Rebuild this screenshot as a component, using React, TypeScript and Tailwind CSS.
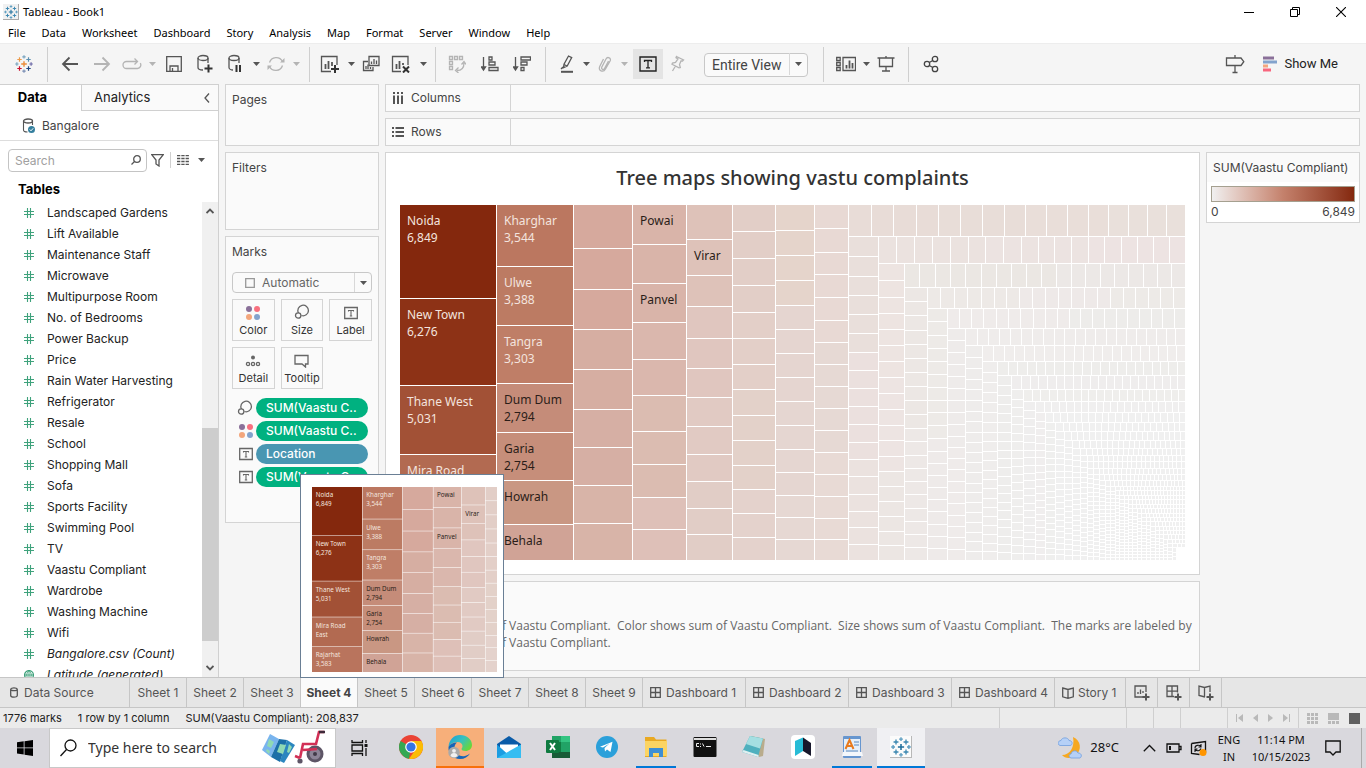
import React from "react";

/* ---------- shared helpers ---------- */

type IconProps = { w?: number; h?: number; color?: string; children: React.ReactNode; className?: string };

const Icon = ({ w = 20, h = 20, color = "#555", children, className }: IconProps) => (
  <svg
    width={w}
    height={h}
    viewBox={`0 0 ${w} ${h}`}
    fill="none"
    stroke={color}
    strokeWidth="1.3"
    aria-hidden="true"
    className={className ?? "shrink-0"}
  >
    {children}
  </svg>
);

const Caret = ({ color = "#555" }: { color?: string }) => (
  <Icon w={7} h={4} color={color}>
    <path d="M0 0h7L3.5 4z" fill={color} stroke="none" />
  </Icon>
);

const Plus = ({ x, y }: { x: number; y: number }) => (
  <path d={`M${x - 4} ${y}h8M${x} ${y - 4}v8`} stroke="#333" strokeWidth="2" />
);

const LogoCross = ({ x, y, r, c, w = 1.2 }: { x: number; y: number; r: number; c: string; w?: number }) => (
  <path d={`M${x - r} ${y}h${2 * r}M${x} ${y - r}v${2 * r}`} stroke={c} strokeWidth={w} />
);

const TableauLogo = ({ size = 18, colors }: { size?: number; colors: string[] }) => (
  <svg width={size} height={size} viewBox="0 0 18 18" fill="none" aria-hidden="true" className="shrink-0">
    <LogoCross x={9} y={9} r={2.8} c={colors[0]} w={1.4} />
    <LogoCross x={4.5} y={4.5} r={2.2} c={colors[1]} />
    <LogoCross x={13.5} y={4.5} r={2.2} c={colors[2]} />
    <LogoCross x={4.5} y={13.5} r={2.2} c={colors[3]} />
    <LogoCross x={13.5} y={13.5} r={2.2} c={colors[4]} />
    <LogoCross x={9} y={1.9} r={1.7} c={colors[5]} />
    <LogoCross x={9} y={16.1} r={1.7} c={colors[6]} />
    <LogoCross x={1.9} y={9} r={1.7} c={colors[7]} />
    <LogoCross x={16.1} y={9} r={1.7} c={colors[8]} />
  </svg>
);

const brandColors = ["#eb8c3a", "#eb9a4a", "#5b8fb0", "#c8102e", "#1f447e", "#7aa5c0", "#7b8fb5", "#7aa5c0", "#6d6aa8"];
const blueColors = ["#1f6f9c", "#3a86b0", "#3a86b0", "#3a86b0", "#3a86b0", "#5b9cc0", "#5b9cc0", "#5b9cc0", "#5b9cc0"];

/* ---------- treemap ---------- */

type Strip = { a: number; b: number; start: number; cuts?: number[]; fills: string[] };

const X_END = 1185;
const Y_END = 560;

const columns: Strip[] = [
  { a: 400, b: 496, start: 205, cuts: [298, 385, 454, 511], fills: ["#84280d", "#8d3216", "#a25136", "#b26a51", "#b9745d"] },
  { a: 497, b: 573, start: 205, cuts: [266, 325, 383, 432, 480, 524], fills: ["#bb7760", "#bc7b63", "#bf7e67", "#c58c79", "#c68e7a", "#c99783", "#d0a396"] },
  { a: 574, b: 632, start: 205, cuts: [248, 289, 329, 369, 409, 447, 485, 523], fills: ["#d6a99d", "#d6aea2", "#d6afa4", "#d8b4a8"] },
  { a: 633, b: 686, start: 205, cuts: [244, 283, 322, 359, 395, 431, 464, 497, 529], fills: ["#d9b4a9", "#dab7ad", "#dbbcb1", "#dec0b8"] },
  { a: 687, b: 732, start: 205, cuts: [239, 275, 306, 338, 368, 397, 426, 454, 481, 508, 534], fills: ["#dec2b9", "#e0c6bf", "#e1cac3", "#e1cdc6"] },
  { a: 733, b: 775, start: 205, cuts: [231, 258, 285, 312, 338, 364, 389, 415, 440, 465, 489, 513, 537], fills: ["#e2cec7", "#e3cfc8", "#e3d1c9", "#e4d2cc"] },
  { a: 776, b: 814, start: 205, cuts: [230, 255, 280, 305, 329, 353, 377, 401, 425, 449, 472, 495, 517, 539], fills: ["#e5d4cb", "#e5d5d0", "#e5d6d1", "#e6d8d3"] },
  { a: 815, b: 848, start: 205, cuts: [228, 252, 274, 297, 320, 342, 364, 386, 408, 430, 452, 474, 496, 518, 539], fills: ["#e8d9d4", "#e6d9d4", "#e8dad5"] },
  { a: 849, b: 878, start: 237, cuts: [256, 276, 295, 314, 333, 352, 370, 388, 406, 424, 442, 459, 476, 494, 511, 527, 544], fills: ["#e9dfdb", "#ebe0de", "#ebe2df"] },
  { a: 879, b: 904, start: 264, cuts: [280, 297, 313, 329, 345, 361, 377, 393, 409, 425, 440, 456, 471, 486, 501, 516, 531, 545], fills: ["#ede4e1", "#ede4e2", "#ece6e3"] },
  { a: 905, b: 927, start: 288, cuts: [301, 315, 330, 344, 358, 372, 386, 400, 414, 428, 441, 455, 468, 481, 494, 508, 521, 534, 547], fills: ["#ece7e4", "#ede8e6"] },
  { a: 928, b: 947, start: 309, cuts: [321, 335, 348, 361, 374, 387, 400, 412, 425, 438, 451, 463, 475, 487, 499, 511, 524, 536, 548], fills: ["#edeae7", "#eeeae9"] },
  { a: 948, b: 965, start: 329, cuts: [340, 352, 364, 376, 388, 400, 412, 424, 436, 447, 458, 469, 481, 492, 503, 515, 526, 537, 549], fills: ["#eeebea", "#efebea"] },
  { a: 966, b: 982, start: 346, fills: ["#eeeceb"] },
  { a: 983, b: 997, start: 362, fills: ["#efedec"] },
  { a: 998, b: 1011, start: 376, fills: ["#eeedec"] },
  { a: 1012, b: 1023, start: 390, fills: ["#efeeed"] },
  { a: 1024, b: 1035, start: 402, fills: ["#efeeee"] },
  { a: 1036, b: 1045, start: 413, fills: ["#f0eeee"] },
  { a: 1046, b: 1055, start: 423, fills: ["#efefee"] },
  ...(
    [
      [1056, 1064, 432], [1065, 1072, 441], [1073, 1080, 449], [1081, 1087, 456], [1088, 1093, 469],
      [1094, 1099, 475], [1100, 1105, 481], [1106, 1110, 487], [1111, 1115, 487], [1116, 1119, 491],
      [1120, 1124, 496], [1125, 1128, 500], [1129, 1132, 505], [1133, 1137, 509], [1138, 1141, 514],
      [1142, 1146, 518], [1147, 1150, 522], [1151, 1155, 527], [1156, 1159, 531], [1160, 1163, 535],
      [1164, 1167, 540], [1168, 1172, 544], [1173, 1176, 548],
    ] as const
  ).map(([a, b, start]) => ({ a, b, start, fills: ["#f0f0f0"] })),
];

const rows: Strip[] = [
  { a: 205, b: 236, start: 849, cuts: [871, 893, 916, 938, 960, 982, 1004, 1025, 1046, 1067, 1088, 1108, 1128, 1147, 1166], fills: ["#e8dcd7", "#e8ddd8", "#e9ded9", "#e9e0db"] },
  { a: 237, b: 263, start: 879, cuts: [896, 914, 932, 950, 968, 985, 1003, 1021, 1038, 1054, 1071, 1088, 1104, 1121, 1137, 1153, 1169], fills: ["#ebe2df", "#ece3e1", "#ede3e2"] },
  { a: 264, b: 287, start: 905, cuts: [919, 935, 950, 965, 981, 996, 1011, 1026, 1041, 1056, 1071, 1085, 1100, 1114, 1128, 1143, 1157, 1171], fills: ["#ebe7e3", "#ece8e6"] },
  { a: 288, b: 308, start: 928, cuts: [940, 954, 967, 981, 994, 1006, 1019, 1032, 1045, 1058, 1071, 1084, 1097, 1110, 1123, 1135, 1148, 1160, 1173], fills: ["#ede9e6", "#eee9e8", "#edeae7"] },
  { a: 309, b: 328, start: 948, cuts: [959, 971, 983, 996, 1008, 1020, 1033, 1045, 1057, 1069, 1080, 1092, 1104, 1116, 1127, 1139, 1151, 1162, 1174], fills: ["#efebea", "#edecea"] },
  { a: 329, b: 345, start: 966, fills: ["#efeceb"] },
  { a: 346, b: 361, start: 983, fills: ["#f0edec"] },
  { a: 362, b: 375, start: 998, fills: ["#eeedeb"] },
  { a: 376, b: 389, start: 1012, fills: ["#efeded"] },
  { a: 390, b: 401, start: 1024, fills: ["#efeeec"] },
  { a: 402, b: 412, start: 1036, fills: ["#f0efef"] },
  ...(
    [
      [413, 422, 1046], [423, 431, 1056], [432, 440, 1065], [441, 448, 1073], [449, 455, 1081],
      [456, 461, 1088], [462, 468, 1088], [469, 474, 1094], [475, 480, 1100], [481, 486, 1106],
      [487, 490, 1116], [491, 495, 1120], [496, 499, 1125], [500, 504, 1129], [505, 508, 1133],
      [509, 513, 1138], [514, 517, 1142], [518, 521, 1147], [522, 526, 1151], [527, 530, 1156],
      [531, 534, 1160], [535, 539, 1164], [540, 543, 1168], [544, 547, 1173],
    ] as const
  ).map(([a, b, start]) => ({ a, b, start, fills: ["#f0f0f0"] })),
];

const cutsOf = (s: Strip, end: number) => {
  if (s.cuts) return s.cuts;
  const length = end - s.start;
  const count = Math.min(21, Math.floor(length / 3.1));
  return Array.from({ length: count - 1 }, (_, i) => {
    const t = (i + 1) / count;
    return s.start + Math.round(length * t * (1.08 - 0.08 * t));
  });
};

const cellsOf = (s: Strip, end: number) => {
  const edges = [s.start - 1, ...cutsOf(s, end), end];
  const n = edges.length - 1;
  return edges.slice(0, n).map((e, i) => ({
    from: e + 1,
    size: edges[i + 1] - e - 1,
    fill: s.fills[Math.floor((i * s.fills.length) / n)],
  }));
};

const labels: { x: number; y: number; lines: string[]; dark?: boolean }[] = [
  { x: 407, y: 225, lines: ["Noida", "6,849"] },
  { x: 407, y: 319, lines: ["New Town", "6,276"] },
  { x: 407, y: 406, lines: ["Thane West", "5,031"] },
  { x: 407, y: 475, lines: ["Mira Road", "East"] },
  { x: 407, y: 532, lines: ["Rajarhat", "3,583"] },
  { x: 504, y: 225, lines: ["Kharghar", "3,544"] },
  { x: 504, y: 287, lines: ["Ulwe", "3,388"] },
  { x: 504, y: 346, lines: ["Tangra", "3,303"] },
  { x: 504, y: 404, lines: ["Dum Dum", "2,794"], dark: true },
  { x: 504, y: 453, lines: ["Garia", "2,754"], dark: true },
  { x: 504, y: 501, lines: ["Howrah"], dark: true },
  { x: 504, y: 545, lines: ["Behala"], dark: true },
  { x: 640, y: 225, lines: ["Powai"], dark: true },
  { x: 694, y: 260, lines: ["Virar"], dark: true },
  { x: 640, y: 304, lines: ["Panvel"], dark: true },
];

const Treemap = ({ box, className, crisp }: { box: string; className: string; crisp?: boolean }) => (
  <svg viewBox={box} className={className} role="img" aria-label="Tree map of Vaastu Compliant by location">
    <g shapeRendering={crisp ? "crispEdges" : "geometricPrecision"}>
      {columns.flatMap((s) =>
        cellsOf(s, Y_END).map((c) => (
          <rect key={`c${s.a}-${c.from}`} x={s.a} y={c.from} width={s.b - s.a} height={c.size} fill={c.fill} />
        ))
      )}
      {rows.flatMap((s) =>
        cellsOf(s, X_END).map((c) => (
          <rect key={`r${s.a}-${c.from}`} x={c.from} y={s.a} width={c.size} height={s.b - s.a} fill={c.fill} />
        ))
      )}
    </g>
    <g className="font-['Noto_Sans',sans-serif] text-[12px]">
      {labels.map((l) =>
        l.lines.map((t, i) => (
          <text key={l.x + t} x={l.x} y={l.y + i * 17} fill={l.dark ? "#2b1d18" : "#f3e4df"}>
            {t}
          </text>
        ))
      )}
    </g>
  </svg>
);

/* ---------- window header ---------- */

const TitleBar = () => (
  <header className="flex h-6 shrink-0 items-center bg-white pl-[3px]">
    <span className="flex h-4 w-4 items-center justify-center border-r border-b border-[#aaa] bg-[#f1f1f1]">
      <TableauLogo size={14} colors={blueColors} />
    </span>
    <span className="ml-1 text-[11px] text-black">Tableau - Book1</span>
    <div className="ml-auto flex h-5">
      <button aria-label="Minimize" className="flex w-[46px] items-center justify-center">
        <Icon w={10} h={10} color="#000"><path d="M0 5.5h10" strokeWidth="1" /></Icon>
      </button>
      <button aria-label="Restore" className="flex w-[46px] items-center justify-center">
        <Icon w={10} h={10} color="#000"><path d="M0.5 2.5h7v7h-7zM2.5 2.5v-2h7v7h-2" strokeWidth="1" /></Icon>
      </button>
      <button aria-label="Close" className="flex w-[46px] items-center justify-center">
        <Icon w={10} h={10} color="#000"><path d="M0 0l10 10M10 0L0 10" strokeWidth="1.1" /></Icon>
      </button>
      <span className="w-0.5" />
    </div>
  </header>
);

const MenuBar = () => (
  <nav className="flex h-[19px] shrink-0 items-center gap-4 bg-white pl-2 text-[11px] text-black">
    {["File", "Data", "Worksheet", "Dashboard", "Story", "Analysis", "Map", "Format", "Server", "Window", "Help"].map((m) => (
      <button key={m}>{m}</button>
    ))}
  </nav>
);

const Sep = () => <span className="h-[35px] w-px shrink-0 bg-[#cfcfcf]" />;

const Tool = ({ label, w, children }: { label: string; w: string; children: React.ReactNode }) => (
  <button aria-label={label} className={`${w} flex h-[30px] shrink-0 items-center justify-center`}>
    {children}
  </button>
);

const Drop = ({ label, color }: { label: string; color?: string }) => (
  <button aria-label={label} className="flex h-[30px] w-3 shrink-0 items-center justify-center">
    <Caret color={color} />
  </button>
);

const LIGHT = "#b4b4b4";

const Toolbar = () => (
  <div className="flex h-[41px] shrink-0 items-center border-t border-[#ededed] bg-[#f5f5f5]">
    <Tool label="Start page" w="w-[47px]"><TableauLogo size={18} colors={brandColors} /></Tool>
    <Sep />
    <div className="ml-1.5 flex items-center">
      <Tool label="Undo" w="w-8">
        <Icon w={18} h={16}><path d="M2 8h15M8.500 1.500L2 8l6.500 6.500" strokeWidth="1.800" /></Icon>
      </Tool>
      <Tool label="Redo" w="w-8">
        <Icon w={18} h={16} color={LIGHT}><path d="M1 8h15M9.500 1.500L16 8l-6.500 6.500" strokeWidth="1.800" /></Icon>
      </Tool>
      <Tool label="Replay" w="w-7">
        <Icon w={20} h={14} color={LIGHT}>
          <path d="M15 4.500H4.500a3.500 3.500 0 0 0 0 7h11a3.500 3.500 0 0 0 2.800-5.300M12.500 1.500l3 3-3 3" />
        </Icon>
      </Tool>
      <Drop label="Replay options" color={LIGHT} />
      <Tool label="Save" w="w-8">
        <Icon w={16} h={16}><path d="M0.700 0.700h14.600v14.600H0.700zM4 15V10h8v5M6.500 15v-3" /></Icon>
      </Tool>
      <Tool label="New data source" w="w-[30px]">
        <Icon w={18} h={20}>
          <ellipse cx="7" cy="4" rx="5" ry="2.500" />
          <path d="M2 4v9.500c0 1.300 2 2.500 5 2.500M12 4v5" />
          <Plus x={12.5} y={14.5} />
        </Icon>
      </Tool>
      <Tool label="Pause auto updates" w="w-[30px]">
        <Icon w={18} h={20}>
          <ellipse cx="8" cy="4" rx="5" ry="2.500" />
          <path d="M3 4v9.500c0 1.300 2 2.500 4 2.500M13 4v5" />
          <path d="M10.500 11v7M14 11v7" stroke="#333" strokeWidth="2" />
        </Icon>
      </Tool>
      <Drop label="Update options" />
      <Tool label="Run update" w="w-7">
        <Icon w={18} h={16} color={LIGHT}>
          <path d="M2.500 6.500A7 7 0 0 1 15.500 5.500M15.500 9.500A7 7 0 0 1 2.500 10.500" />
          <path d="M13 6.500h4.500V2zM5 9.500H0.500V14z" fill={LIGHT} stroke="none" />
        </Icon>
      </Tool>
      <Drop label="Run options" color={LIGHT} />
    </div>
    <span className="w-[7px]" />
    <Sep />
    <div className="ml-[5px] flex items-center">
      <Tool label="New worksheet" w="w-[30px]">
        <Icon w={20} h={18}>
          <path d="M11 16.500H1.500V1.500h15.500V10" />
          <path d="M5.500 14V9M8.500 14V6M12 11V7" strokeWidth="1.800" />
          <Plus x={15} y={14} />
        </Icon>
      </Tool>
      <Drop label="New sheet options" />
      <Tool label="Duplicate" w="w-7">
        <Icon w={18} h={18}>
          <path d="M7 1.500h10v9H7zM6 6.500H1.500v9h9.500V12" />
          <path d="M9.500 9V6.500M12 9V4M14.500 9V5.500M4 14v-3M6 14V9.500M8.500 14v-2" />
        </Icon>
      </Tool>
      <Tool label="Clear sheet" w="w-8">
        <Icon w={20} h={18}>
          <path d="M10 16.500H1.500V1.500h15.500V10" />
          <path d="M5.500 14V9M8.500 14V6M12 10V8" strokeWidth="1.800" />
          <path d="M12 11.500l6 6M18 11.500l-6 6" stroke="#333" strokeWidth="2" />
        </Icon>
      </Tool>
      <Drop label="Clear options" />
    </div>
    <span className="w-1.5" />
    <Sep />
    <div className="ml-[5px] flex items-center">
      <Tool label="Swap rows and columns" w="w-8">
        <Icon w={18} h={18} color={LIGHT}>
          <path d="M1.500 1.500h3v3h-3zM6.500 1.500h3v3h-3zM11.500 1.500h3v3h-3zM1.500 6.500h3v3h-3zM1.500 11.500h3v3h-3z" />
          <path d="M16 8c0 5-3 7.500-7 7.500M13.500 9.500L16 6.500l2 3M10.500 12.500L7.500 15.500l3 2.500" />
        </Icon>
      </Tool>
      <Tool label="Sort ascending" w="w-[34px]">
        <Icon w={18} h={16}>
          <path d="M2.500 1v12M0.500 11l2 3 2-3z" fill="#555" />
          <path d="M8 1h3v3H8zM8 6h6v3H8zM8 11.500h9v3H8z" />
        </Icon>
      </Tool>
      <Tool label="Sort descending" w="w-[30px]">
        <Icon w={18} h={16}>
          <path d="M2.500 1v12M0.500 11l2 3 2-3z" fill="#555" />
          <path d="M8 1h9.500v3H8zM8 6h6v3H8zM8 11.500h3v3H8z" />
        </Icon>
      </Tool>
    </div>
    <span className="w-2" />
    <Sep />
    <div className="ml-2 flex items-center">
      <Tool label="Highlight" w="w-[26px]">
        <Icon w={16} h={18}>
          <path d="M9.500 1l3.200 1.600-4.500 8.500-3.700 1.500.5-3.500zM5 9.500l3 1.500M4 12l-2 2" />
          <path d="M2 16.800h12" strokeWidth="2" />
        </Icon>
      </Tool>
      <Drop label="Highlight options" />
      <Tool label="Group" w="w-[26px]">
        <Icon w={16} h={18} color={LIGHT}>
          <path d="M11.500 6L7.500 13.500c-1 1.800-3.500 0.800-2.800-1.300L9 4c1.500-2.800 5.500-1 4.200 1.800L8.500 14c-2.200 4-7.700 1.800-5.800-2.500L6.500 4" />
        </Icon>
      </Tool>
      <Drop label="Group options" color={LIGHT} />
      <button aria-label="Show mark labels" aria-pressed="true" className="ml-[3px] flex h-[30px] w-[30px] items-center justify-center bg-[#e4e4e4]">
        <Icon w={18} h={16} color="#222">
          <path d="M1 1h16v14H1z" strokeWidth="1.400" />
          <path d="M5.500 6V4.500h7V6M9 4.500v7M7 11.800h4" />
        </Icon>
      </button>
      <Tool label="Fix axes" w="w-[30px]">
        <Icon w={16} h={18} color={LIGHT}>
          <path d="M6.500 1.500l7 3.500-1 1-1.500 0-1.500 3.500.8 3-1.300.3-7-3.500.5-1.300 3-.7L8 4 6 2.700zM5.500 11l-3 5" />
        </Icon>
      </Tool>
      <div className="relative ml-[11px] h-6 w-[104px]">
        <select aria-label="Fit" className="h-full w-full appearance-none rounded-sm border border-[#c8c8c8] bg-[#fafafa] pl-[7px] font-['Roboto',sans-serif] text-sm text-[#444]">
          <option>Entire View</option>
        </select>
        <span className="pointer-events-none absolute inset-y-px right-px flex w-[18px] items-center justify-center border-l border-[#d8d8d8]">
          <Caret />
        </span>
      </div>
    </div>
    <span className="w-[15px]" />
    <Sep />
    <div className="ml-2 flex items-center">
      <Tool label="Show or hide cards" w="w-7">
        <Icon w={20} h={16}>
          <path d="M0.700 1.500h3.500v3H0.700zM0.700 6.500h3.500v3H0.700zM0.700 11.500h3.500v3H0.700zM7 1.500h12.500v13H7z" />
          <path d="M10.500 12.500V9M13.500 12.500V4.500M16.500 12.500V7" strokeWidth="1.800" />
        </Icon>
      </Tool>
      <Drop label="Card options" />
      <Tool label="Presentation mode" w="w-7">
        <Icon w={18} h={18}><path d="M0.500 3h17M2.500 3v8.500h13V3M9 1v2M9 11.500v4.500M5 16h8" /></Icon>
      </Tool>
    </div>
    <span className="w-2" />
    <Sep />
    <div className="ml-2 flex items-center">
      <Tool label="Share" w="w-7">
        <Icon w={16} h={18} color="#444">
          <circle cx="4" cy="9" r="2.700" /><circle cx="12" cy="4" r="2.700" /><circle cx="12" cy="14" r="2.700" />
          <path d="M6.300 7.500l3.500-2M6.300 10.500l3.500 2" />
        </Icon>
      </Tool>
    </div>
    <div className="ml-auto flex items-center pr-7">
      <Tool label="Guide" w="w-9">
        <Icon w={20} h={20}><path d="M1.500 4h14.500l2.800 3.700-2.800 3.800H1.500zM10 1v3M10 11.500v7M7.500 18.500h5" /></Icon>
      </Tool>
      <button className="ml-2.5 flex items-center gap-1.5 font-['Roboto',sans-serif] text-[13px] text-[#222]">
        <Icon w={15} h={16}>
          <g stroke="none">
            <path d="M0 0.500h11v3H0z" fill="#8a7099" /><path d="M0 4.500h14v3H0z" fill="#83a3cd" />
            <path d="M0 8.500h5v3H0z" fill="#f3a680" /><path d="M0 12.500h8v3H0z" fill="#f8667e" />
          </g>
        </Icon>
        Show Me
      </button>
    </div>
  </div>
);

/* ---------- data pane ---------- */

const fields = [
  "Landscaped Gardens", "Lift Available", "Maintenance Staff", "Microwave", "Multipurpose Room", "No. of Bedrooms",
  "Power Backup", "Price", "Rain Water Harvesting", "Refrigerator", "Resale", "School", "Shopping Mall", "Sofa",
  "Sports Facility", "Swimming Pool", "TV", "Vaastu Compliant", "Wardrobe", "Washing Machine", "Wifi",
];

const Hash = () => (
  <Icon w={10} h={10} color="#3fa27c"><path d="M3.500 0v10M6.500 0v10M0 3.500h10M0 6.500h10" strokeWidth="1.100" /></Icon>
);

const DataPane = () => (
  <aside className="flex w-[219px] shrink-0 flex-col border-t border-r border-[#d0d0d0] bg-white">
    <div className="flex h-[26px] shrink-0 text-[13px]">
      <button className="w-[81px] pr-4 font-bold text-black">Data</button>
      <button className="flex flex-1 items-center border-b border-l border-[#d0d0d0] bg-[#fafafa] pl-3 text-[#222]">
        Analytics
        <Icon w={6} h={10} className="ml-auto mr-2"><path d="M5 0.500L1 5l4 4.500" /></Icon>
      </button>
    </div>
    <div className="flex h-[30px] shrink-0 items-center gap-[7px] border-b border-[#ddd] pl-[22px] text-xs text-[#444]">
      <Icon w={13} h={16}>
        <ellipse cx="6" cy="3" rx="4.500" ry="2" />
        <path d="M1.500 3v9c0 1 1.500 2 4 2M10.500 3v4" strokeWidth="1.100" />
        <circle cx="9.500" cy="11.500" r="3.500" fill="#347f9e" stroke="none" />
        <path d="M7.800 11.500l1.200 1.300 2.200-2.500" stroke="#fff" strokeWidth="1" />
      </Icon>
      Bangalore
    </div>
    <div className="mt-[7px] flex h-6 shrink-0 items-center pl-2">
      <div className="relative h-[23px] w-[139px]">
        <input aria-label="Search fields" placeholder="Search" className="block h-full w-full rounded-sm border border-[#c4c4c4] pl-1.5 text-xs placeholder:text-[#a0a0a0]" />
        <Icon w={10} h={10} className="pointer-events-none absolute top-1.5 right-1.5">
          <circle cx="6" cy="4" r="3.300" /><path d="M3.500 6.500L0.500 9.500" />
        </Icon>
      </div>
      <button aria-label="Filter fields" className="ml-1"><Icon w={13} h={13}><path d="M0.700 0.700h11.600L8 6v6L5 10V6z" /></Icon></button>
      <span className="ml-1.5 h-4 w-px bg-[#d0d0d0]" />
      <button aria-label="Display options" className="ml-1.5 flex items-center gap-[9px]">
        <Icon w={12} h={10}><path d="M0 0.500h12M0 3.500h12M0 6.500h12M0 9.500h12" strokeDasharray="3.300 1" /></Icon>
        <Caret />
      </button>
    </div>
    <h2 className="mt-1.5 h-6 shrink-0 pl-[18px] text-[13px] leading-[22px] font-bold text-black">Tables</h2>
    <div className="flex min-h-0 flex-1">
      <ul className="min-w-0 flex-1 overflow-hidden text-xs whitespace-nowrap text-[#222]">
        {fields.map((f) => (
          <li key={f} className="flex h-[21px] items-center gap-[13px] pl-6"><Hash />{f}</li>
        ))}
        <li className="flex h-[21px] items-center gap-[13px] pl-6 italic"><Hash />Bangalore.csv (Count)</li>
        <li className="flex h-[21px] items-center gap-[13px] pl-6 italic">
          <Icon w={10} h={10} color="#3fa27c"><circle cx="5" cy="5" r="4.400" /><path d="M5 0.500v9M0.500 5h9M5 0.500c-3 3-3 6 0 9M5 0.500c3 3 3 6 0 9" strokeWidth="0.900" /></Icon>
          Latitude (generated)
        </li>
      </ul>
      <div className="flex w-4 flex-col items-center bg-[#f0f0f0]">
        <Icon w={8} h={6} className="mt-1.5 shrink-0"><path d="M0.500 5L4 1.500 7.500 5" strokeWidth="1.800" /></Icon>
        <span className="grow-[9]" />
        <span className="w-full grow-[9] bg-[#cdcdcd]" />
        <span className="grow-1" />
        <Icon w={8} h={6} className="mb-1.5 shrink-0"><path d="M0.500 1L4 4.500 7.500 1" strokeWidth="1.800" /></Icon>
      </div>
    </div>
  </aside>
);

/* ---------- marks card ---------- */

const ColorDots = () => (
  <Icon w={14} h={14}>
    <g stroke="none">
      <circle cx="3" cy="3" r="3" fill="#8a7099" /><circle cx="11" cy="3" r="3" fill="#f8707f" />
      <circle cx="3" cy="11" r="3" fill="#f3a67c" /><circle cx="11" cy="11" r="3" fill="#83a3cd" />
    </g>
  </Icon>
);
const SizeIcon = () => (
  <Icon w={16} h={16} color="#666"><path d="M4.500 9A5.300 5.300 0 1 1 7.500 11.500" /><circle cx="4.200" cy="11.500" r="2.700" /></Icon>
);
const LabelIcon = () => (
  <Icon w={14} h={14} color="#666">
    <path d="M0.700 1.500h12.600v11H0.700z" /><path d="M4.500 5.500v-1h5v1M7 4.500v5.500M5.800 10h2.400" strokeWidth="1.100" />
  </Icon>
);
const DetailIcon = () => (
  <Icon w={16} h={14} color="#666">
    <circle cx="8" cy="3.500" r="2" fill="#666" stroke="none" />
    <circle cx="3" cy="10" r="1.600" /><circle cx="8" cy="10" r="1.600" /><circle cx="13" cy="10" r="1.600" />
  </Icon>
);
const TooltipIcon = () => (
  <Icon w={15} h={14} color="#666"><path d="M1 1.500h13v8.500h-2.500v3L8 10H1z" /></Icon>
);

const markButtons: [string, React.ReactNode][] = [
  ["Color", <ColorDots />], ["Size", <SizeIcon />], ["Label", <LabelIcon />], ["Detail", <DetailIcon />], ["Tooltip", <TooltipIcon />],
];
const pills: [string, React.ReactNode, string][] = [
  ["SUM(Vaastu C..", <SizeIcon />, "bg-[#00b180]"],
  ["SUM(Vaastu C..", <ColorDots />, "bg-[#00b180]"],
  ["Location", <LabelIcon />, "bg-[#4996b2]"],
  ["SUM(Vaastu C..", <LabelIcon />, "bg-[#00b180]"],
];

const Cards = () => (
  <div className="flex w-[154px] shrink-0 flex-col gap-1.5 text-xs leading-5 text-[#444]">
    <section className="h-[62px] border border-[#d4d4d4] bg-[#fafafa] px-1.5 pt-[5px]">Pages</section>
    <section className="h-[78px] border border-[#d4d4d4] bg-[#fafafa] px-1.5 pt-[5px]">Filters</section>
    <section className="border border-[#d4d4d4] bg-[#fafafa] px-1.5 pt-[5px] pb-[35px]">
      <h2>Marks</h2>
      <div className="relative mt-2.5 h-[21px]">
        <select aria-label="Mark type" className="block h-full w-full appearance-none rounded-sm border border-[#c8c8c8] bg-[#fafafa] pl-[29px] text-xs text-[#666]">
          <option>Automatic</option>
        </select>
        <span className="pointer-events-none absolute inset-y-0 left-[13px] flex items-center">
          <Icon w={10} h={10} color="#999"><path d="M0.700 0.700h8.600v8.600H0.700z" /></Icon>
        </span>
        <span className="pointer-events-none absolute inset-y-px right-px flex w-[17px] items-center justify-center border-l border-[#d8d8d8]">
          <Caret />
        </span>
      </div>
      <div className="mt-1.5 grid grid-cols-3 gap-1.5">
        {markButtons.map(([name, icon]) => (
          <button key={name} className="flex h-[42px] flex-col items-center justify-end gap-px border border-[#d4d4d4] pb-px text-[11px] text-[#333]">
            {icon}
            <span className="leading-[18px]">{name}</span>
          </button>
        ))}
      </div>
      <ul className="mt-[9px] flex flex-col gap-[3px]">
        {pills.map(([name, icon, tone], i) => (
          <li key={i} className="flex h-5 items-center gap-[3px] pr-1">
            <span className="flex w-[21px] shrink-0 justify-end">{icon}</span>
            <button className={`${tone} h-5 flex-1 rounded-full pl-2.5 text-left text-xs font-medium whitespace-nowrap text-white`}>{name}</button>
          </li>
        ))}
      </ul>
    </section>
  </div>
);

/* ---------- worksheet ---------- */

const Shelf = ({ name, icon }: { name: string; icon: React.ReactNode }) => (
  <div className="flex h-7 shrink-0 border border-[#d4d4d4] bg-[#fafafa] text-xs text-[#444]">
    <div className="flex w-[125px] items-center gap-[7px] border-r border-[#d4d4d4] pl-1.5">{icon}{name}</div>
  </div>
);

const Worksheet = () => (
  <main className="flex min-w-0 flex-1 flex-col gap-1.5">
    <Shelf name="Columns" icon={<Icon w={12} h={12}><path d="M2 0v2M2 3.500V12M6 0v2M6 3.500V12M10 0v2M10 3.500V12" strokeWidth="2" /></Icon>} />
    <Shelf name="Rows" icon={<Icon w={12} h={10}><path d="M0 1h2M3.500 1H12M0 5h2M3.500 5H12M0 9h2M3.500 9H12" strokeWidth="2" /></Icon>} />
    <div className="flex min-h-0 flex-1 gap-1.5">
      <div className="flex min-w-0 flex-1 flex-col gap-1.5">
        <section className="flex min-h-0 flex-1 flex-col border border-[#d4d4d4] bg-white px-3.5 pb-3.5">
          <h1 className="h-[52px] shrink-0 pt-3 text-center font-['Noto_Sans',sans-serif] text-xl leading-[26px] font-medium text-[#333]">
            Tree maps showing vastu complaints
          </h1>
          <Treemap crisp box="400 205 785 355" className="min-h-0 w-full flex-1" />
        </section>
        <section className="h-[90px] shrink-0 border border-[#d4d4d4] bg-[#fafafa] pt-[35px] pl-1.5 font-['Open_Sans',sans-serif] text-xs leading-[17px] whitespace-pre-wrap text-[#666]">
          {"Location and sum of Vaastu Compliant.  Color shows sum of Vaastu Compliant.  Size shows sum of Vaastu Compliant.  The marks are labeled by Location and sum of Vaastu Compliant."}
        </section>
      </div>
      <section className="h-[71px] w-[154px] shrink-0 border border-[#d4d4d4] bg-white text-xs text-[#444]">
        <h2 className="h-[29px] bg-[#fafafa] pl-1.5 leading-[30px]">SUM(Vaastu Compliant)</h2>
        <div className="mx-1 mt-1 h-4 border border-[#a5a090] bg-linear-to-r from-[#f0f0f0] via-[#c4816c] to-[#84280d]" />
        <div className="flex justify-between px-1 leading-[19px]"><span>0</span><span>6,849</span></div>
      </section>
    </div>
  </main>
);

/* ---------- sheet tabs and status ---------- */

const GridIcon = () => <Icon w={11} h={11}><path d="M0.700 0.700h9.600v9.600H0.700zM5.500 0.700v9.600M0.700 5.500h9.600" /></Icon>;
const BookIcon = () => <Icon w={12} h={12}><path d="M0.700 1l5.300 1.500L11.300 1v8.800L6 11.300 0.700 9.800zM6 2.500v8.800" /></Icon>;

const sheets = ["Sheet 1", "Sheet 2", "Sheet 3", "Sheet 4", "Sheet 5", "Sheet 6", "Sheet 7", "Sheet 8", "Sheet 9"];

const SheetTabs = () => (
  <div className="flex h-[31px] shrink-0 border-y border-[#c6c6c6] bg-[#e6e6e6] text-xs text-[#555]">
    <button className="flex w-[130px] shrink-0 items-center gap-1.5 border-r border-[#c6c6c6] pl-2.5">
      <Icon w={8} h={11}><path d="M0.700 2.500v6c0 2.200 6.600 2.200 6.600 0v-6c0-2.200-6.600-2.200-6.600 0c0 1.500 6.600 1.500 6.600 0" /></Icon>
      Data Source
    </button>
    {sheets.map((s) =>
      s === "Sheet 4" ? (
        <div key={s} className="relative shrink-0">
          <button aria-current="page" className="h-full w-[57px] border-r border-[#c6c6c6] bg-[#fafafa] font-bold text-[#444]">{s}</button>
          <div className="absolute bottom-full left-0 z-10 -ml-px h-[204px] w-[204px] border border-[#6a7f95] bg-white pt-3 pl-[11px]">
            <Treemap box="400 205 355 355" className="h-[185px] w-[185px]" />
          </div>
        </div>
      ) : (
        <button key={s} className="w-[57px] shrink-0 border-r border-[#c6c6c6]">{s}</button>
      )
    )}
    {["Dashboard 1", "Dashboard 2", "Dashboard 3", "Dashboard 4"].map((d) => (
      <button key={d} className="flex w-[103px] shrink-0 items-center gap-[5px] border-r border-[#c6c6c6] pl-[7px] whitespace-nowrap"><GridIcon />{d}</button>
    ))}
    <button className="flex w-[71px] shrink-0 items-center gap-1 border-r border-[#c6c6c6] pl-[7px]"><BookIcon />Story 1</button>
    <button aria-label="New worksheet" className="flex w-8 shrink-0 items-center justify-center border-r border-[#c6c6c6]">
      <Icon w={16} h={16}><path d="M9 12H1V1h11v6M4 9V7M6.500 9V4.500M9 8V6" /><path d="M8.500 12h7M12 8.500v7" strokeWidth="2" /></Icon>
    </button>
    <button aria-label="New dashboard" className="flex w-8 shrink-0 items-center justify-center border-r border-[#c6c6c6]">
      <Icon w={16} h={16}><path d="M8 11.500H1V1h10.500v6.500M6 1v10.500M1 6.200h10.500" /><path d="M8.500 12h7M12 8.500v7" strokeWidth="2" /></Icon>
    </button>
    <button aria-label="New story" className="flex w-8 shrink-0 items-center justify-center border-r border-[#c6c6c6]">
      <Icon w={16} h={16}><path d="M7 12L1 10.500V1l5.500 1.500L12 1v6M6.500 2.500V12" /><path d="M8.500 12h7M12 8.500v7" strokeWidth="2" /></Icon>
    </button>
  </div>
);

const G = "#b9b9b9";

const StatusBar = () => (
  <footer className="flex h-5 shrink-0 items-stretch bg-[#ebebeb] text-[11px] text-[#222]">
    <div className="flex items-center gap-4 pl-[3px]">
      <span>1776 marks</span><span>1 row by 1 column</span><span>SUM(Vaastu Compliant): 208,837</span>
    </div>
    <div className="ml-auto flex">
      <span className="w-[127px] border-l border-[#cfcfcf]" />
      <span className="w-[27px] border-l border-[#cfcfcf]" />
      <span className="w-[27px] border-l border-[#cfcfcf]" />
      <span className="w-[47px] border-l border-[#cfcfcf]" />
      <div className="flex w-[71px] items-center justify-between border-l border-[#cfcfcf] px-2">
        <button aria-label="First sheet"><Icon w={7} h={8}><path d="M0 0h1v8H0zM7 0v8L2 4z" fill={G} stroke="none" /></Icon></button>
        <button aria-label="Previous sheet"><Icon w={5} h={8}><path d="M5 0v8L0 4z" fill={G} stroke="none" /></Icon></button>
        <button aria-label="Next sheet"><Icon w={5} h={8}><path d="M0 0v8l5-4z" fill={G} stroke="none" /></Icon></button>
        <button aria-label="Last sheet"><Icon w={7} h={8}><path d="M6 0h1v8H6zM0 0v8l5-4z" fill={G} stroke="none" /></Icon></button>
      </div>
      <div className="flex w-[68px] items-center gap-[10px] border-l border-[#cfcfcf] pl-2">
        <button aria-label="Sheet sorter"><Icon w={11} h={11}><path d="M0 1.500h11M0 5.500h11M0 9.500h11" stroke={G} strokeWidth="3" strokeDasharray="3 1" /></Icon></button>
        <button aria-label="Filmstrip"><Icon w={11} h={11}><path d="M0 0h11v7H0z" fill={G} stroke="none" /><path d="M0 9.500h11" stroke={G} strokeWidth="3" strokeDasharray="3 1" /></Icon></button>
        <button aria-label="Tabs"><Icon w={11} h={11}><path d="M0 0h11v11H0z" fill="#606060" stroke="none" /></Icon></button>
      </div>
    </div>
  </footer>
);

/* ---------- desktop taskbar ---------- */

const App24 = ({ children }: { children: React.ReactNode }) => (
  <svg width="24" height="24" viewBox="0 0 24 24" aria-hidden="true">{children}</svg>
);

const Chrome = () => (
  <App24>
    <circle cx="12" cy="12" r="12" fill="#ea4335" />
    <path d="M1.600 6L12 12l-2 11.800A12 12 0 0 1 1.600 6z" fill="#34a853" />
    <path d="M12 6h10.400A12 12 0 0 1 10 23.800L17 14z" fill="#fbbc05" />
    <circle cx="12" cy="12" r="5.800" fill="#fff" /><circle cx="12" cy="12" r="4.600" fill="#3574e2" />
  </App24>
);
const Edge = () => (
  <App24>
    <defs>
      <linearGradient id="edgeTop" x1="0" y1="0" x2="1" y2="0.600"><stop offset="0" stopColor="#1b9bd8" /><stop offset="0.550" stopColor="#35c1c0" /><stop offset="1" stopColor="#68d63c" /></linearGradient>
    </defs>
    <path d="M0.500 12C1 4.500 6 0 12 0c7 0 12 4.500 12 10 0 3.800-3 6-6.500 6-2.500 0-4-1-4-2 0-.8 1-1 1-3 0-2-2-4-5-4-5 0-8 3-9 5z" fill="url(#edgeTop)" />
    <path d="M0.500 12C2 9 5 7.500 9 7.500c-2 1.500-3 4-2.500 7C7.500 19 12 22 17 21c2-.4 3.500-1.300 5-2.500-2 3.500-5.500 5.500-10 5.500C5 24 0 18.500 0.500 12z" fill="#1565b8" />
    <circle cx="6" cy="17.500" r="5.700" fill="#a9a9a9" /><circle cx="6" cy="15.800" r="1.900" fill="#f0f0f0" /><path d="M2.500 21c0-4 7-4 7 0-2 1.800-5 1.800-7 0z" fill="#f0f0f0" />
  </App24>
);
const Mail = () => (
  <App24>
    <path d="M0 9L12 1l12 8v14H0z" fill="#0a5ba8" /><path d="M3 9.500h18V18H3z" fill="#fff" />
    <path d="M0 9.500L15 23H0z" fill="#1b9de2" /><path d="M24 9.500V23H0z" fill="#35bdf2" />
  </App24>
);
const Excel = () => (
  <App24>
    <path d="M6 1h18v22H6z" fill="#21a366" /><path d="M15 1h9v6h-9z" fill="#33c481" /><path d="M6 7h9v11H6z" fill="#107c41" /><path d="M6 17h18v6H6z" fill="#185c37" />
    <rect x="0" y="5" width="13" height="13" rx="1" fill="#0f7a40" /><path d="M4 8l5 7M9 8l-5 7" stroke="#fff" strokeWidth="2" />
  </App24>
);
const Telegram = () => (
  <App24><circle cx="12" cy="12" r="11" fill="#2ba0da" /><path d="M5 11.800l12.500-5L15.500 17l-3.500-2.400-2 2-.5-3.500 5-4.500-6.500 4z" fill="#fff" /></App24>
);
const Folder = () => (
  <App24>
    <path d="M1 2h9l2 2.500h10.500V22H1z" fill="#e9a922" /><path d="M1 6h22v15H1z" fill="#fcd462" />
    <path d="M5 13h14v9h-4v-4H9v4H5z" fill="#3e8fd4" />
  </App24>
);
const Terminal = () => (
  <App24>
    <rect x="0.500" y="2" width="23" height="20" rx="1" fill="#111" /><path d="M1 3h22v2H1z" fill="#ddd" />
    <path d="M6 8.500H3.500v3H6M7.500 8.500v1M7.500 11v1M9.500 8.500l1.500 3M13 11.500h5" stroke="#eee" fill="none" />
  </App24>
);
const Notepad = () => (
  <App24><path d="M9 1l14 3-2 17-4 1z" fill="#b9ac8c" /><path d="M8 1l13 2.500L16 22 0 17z" fill="#4fb0be" /><path d="M8 1l13 2.500-3 10L4 9z" fill="#a5dfe2" /><path d="M0 17l16 5 .5-2L1.500 15z" fill="#dfeff0" /></App24>
);
const MapApp = () => (
  <App24><rect width="24" height="24" rx="4" fill="#fff" /><path d="M4 6l8-3.500V16l-8 5z" fill="#27bcd6" /><path d="M12 2.500L20 8v13l-8-5z" fill="#17172b" /></App24>
);
const WordPad = () => (
  <App24>
    <rect x="3" y="1" width="18" height="22" rx="1" fill="#6796cf" /><path d="M4 4h16v14H4z" fill="#e5effa" /><path d="M3 17h19l1 4H2z" fill="#f4f7fb" />
    <path d="M5.500 14l4-9 4 9M7 11h5" stroke="#e87a1d" strokeWidth="2" fill="none" /><path d="M14 7h5M14 10h5M6 16h12" stroke="#5b88bb" />
  </App24>
);
const TableauApp = () => (
  <span className="flex h-[22px] w-[22px] items-center justify-center border-r border-b border-[#b8b8b8] bg-[#fbfbfb]"><TableauLogo size={20} colors={blueColors} /></span>
);

const apps: [string, React.ReactNode, "" | "attention" | "open" | "active"][] = [
  ["Google Chrome", <Chrome />, ""], ["Microsoft Edge", <Edge />, "attention"], ["Mail", <Mail />, ""], ["Excel", <Excel />, ""],
  ["Telegram", <Telegram />, ""], ["File Explorer", <Folder />, "open"], ["Command Prompt", <Terminal />, ""], ["Notepad", <Notepad />, ""],
  ["Maps", <MapApp />, ""], ["WordPad", <WordPad />, "open"], ["Tableau", <TableauApp />, "active"],
];
const appTone = {
  "": "border-transparent",
  attention: "border-[#f7700c] bg-[#f7af7a]",
  open: "border-transparent",
  active: "border-[#0078d7] bg-[#f0f0f3]",
};

const Taskbar = () => (
  <div className="flex h-10 shrink-0 items-stretch bg-[#d9d8dd] text-[11px] text-[#111]">
    <button aria-label="Start" className="flex w-[49px] items-center justify-center">
      <Icon w={16} h={16}><path d="M0 2.300L6.700 1.300v6.200H0zM7.500 1.200L16 0v7.500H7.500zM0 8.300h6.700v6.300L0 13.600zM7.500 8.300H16V16l-8.500-1.200z" fill="#000" stroke="none" /></Icon>
    </button>
    <label className="flex w-[287px] items-center border border-[#c8c8c8] bg-white pl-2.5">
      <Icon w={17} h={18} color="#111"><circle cx="10.500" cy="6.500" r="5.500" /><path d="M6.500 10.500L0.500 17" /></Icon>
      <input aria-label="Search the computer" placeholder="Type here to search" className="ml-[11px] w-[160px] text-sm placeholder:text-[#333]" />
      <svg width="66" height="36" viewBox="0 0 66 36" aria-hidden="true" className="ml-auto mr-2">
        <path d="M9 4l9 5-8 18-9-7z" fill="#79b4ee" /><path d="M18 9l8 1-7 22-9-5z" fill="#1c6fa8" /><path d="M26 10l8 5-11 18-4-2z" fill="#2b86bf" />
        <path d="M8 9l5 3-3 6-4-2zM19 14l6 1-3 9-6-2zM28 14l3 3-3 6-2-1zM6 19l3 2-1 3-3-3z" fill="#8fd9b4" />
        <circle cx="54" cy="24" r="8.500" fill="#5d5566" /><circle cx="54" cy="24" r="5.500" fill="#8d8598" /><circle cx="54" cy="24" r="2" fill="#413a49" />
        <circle cx="39" cy="31" r="2.600" fill="#5d5566" />
        <path d="M63 2h-5l-3 12H42l-3 14M42 20l14-1M34 26l5 2" stroke="#d23056" strokeWidth="2.600" fill="none" /><path d="M58 2h6" stroke="#3f2a3a" strokeWidth="2.500" />
      </svg>
    </label>
    <button aria-label="Task view" className="flex w-[47px] items-center justify-center">
      <Icon w={17} h={16} color="#111"><path d="M1 0v2.500h10.500V0M1 16v-2.500h10.500V16M1 5h10.500v6H1zM15 0v3M15 8v8" /><path d="M13.500 4h3v3h-3z" fill="#111" stroke="none" /></Icon>
    </button>
    <div className="ml-1 flex gap-px">
      {apps.map(([name, icon, state]) => (
        <button key={name} aria-label={name} className={`${appTone[state]} relative flex w-12 items-center justify-center border-b-2`}>
          {icon}
          {state === "open" && <span className="absolute inset-x-1 -bottom-0.5 h-0.5 bg-[#0078d7]" />}
        </button>
      ))}
    </div>
    <div className="ml-auto flex items-center">
      <button className="flex items-center gap-2 text-[13px]">
        <svg width="24" height="24" viewBox="0 0 24 24" aria-hidden="true">
          <path d="M15 1c8 3 9 13 3 18-4 4-11 4-14 0 8 0 13-8 11-18z" fill="#f6a821" />
          <path d="M2 9.500c-3-1-2-5 1-5C4 1 10 1 11 4.500c4 0 4 5 1 5z" fill="#b5d0f7" stroke="#6f9ee0" strokeWidth="0.800" />
          <path d="M13 22c-3-1-2-4 0-4 1-4 6-4 7-1 4 0 4 4 2 5z" fill="#b5d0f7" stroke="#6f9ee0" strokeWidth="0.800" />
        </svg>
        28°C
      </button>
      <button aria-label="Show hidden icons" className="ml-6"><Icon w={13} h={8} color="#111"><path d="M0.800 7.200L6.500 1.500l5.700 5.700" /></Icon></button>
      <button aria-label="Battery" className="ml-2.5">
        <Icon w={16} h={10} color="#111"><path d="M1 1h12v8H1zM13.500 3.500h1.500v3h-1.500" /><path d="M3 3h2v4H3z" fill="#111" stroke="none" /></Icon>
      </button>
      <button aria-label="Sync" className="ml-2">
        <Icon w={17} h={16} color="#111">
          <path d="M1.500 3.500l14-2v11M1.500 3.500v10l8 1" /><path d="M5 8c0-3 4-3.500 6-1.500M11 4v3H8.500M11 8.500c-1 2.500-4 3-6 1M5 12V9h2.500" strokeWidth="1.100" />
          <circle cx="13" cy="12.500" r="3.500" fill="#ff9500" stroke="none" />
        </Icon>
      </button>
      <button className="ml-2 flex w-7 flex-col items-center leading-[17px]"><span>ENG</span><span>IN</span></button>
      <button className="ml-1.5 flex w-16 flex-col items-center leading-[17px] whitespace-nowrap"><span>11:14 PM</span><span>10/15/2023</span></button>
      <button aria-label="Notifications" className="ml-3"><Icon w={16} h={16} color="#111"><path d="M0.800 1h14.400v11H11l-3 3-3-3H0.800z" /></Icon></button>
      <span className="ml-5 h-10 w-px bg-[#aaa]" />
      <span className="w-1" />
    </div>
  </div>
);

export default function App() {
  return (
    <div className="flex h-screen min-h-[600px] flex-col overflow-hidden bg-[#f5f5f5] font-['Noto_Sans',sans-serif]">
      <TitleBar />
      <MenuBar />
      <div className="flex min-h-0 flex-1 flex-col font-['Inter',sans-serif]">
        <Toolbar />
        <div className="flex min-h-0 flex-1">
          <DataPane />
          <div className="flex min-w-0 flex-1 gap-1.5 pb-1.5 pr-1.5 pl-1.5">
            <Cards />
            <Worksheet />
          </div>
        </div>
        <SheetTabs />
        <StatusBar />
      </div>
      <Taskbar />
    </div>
  );
}
